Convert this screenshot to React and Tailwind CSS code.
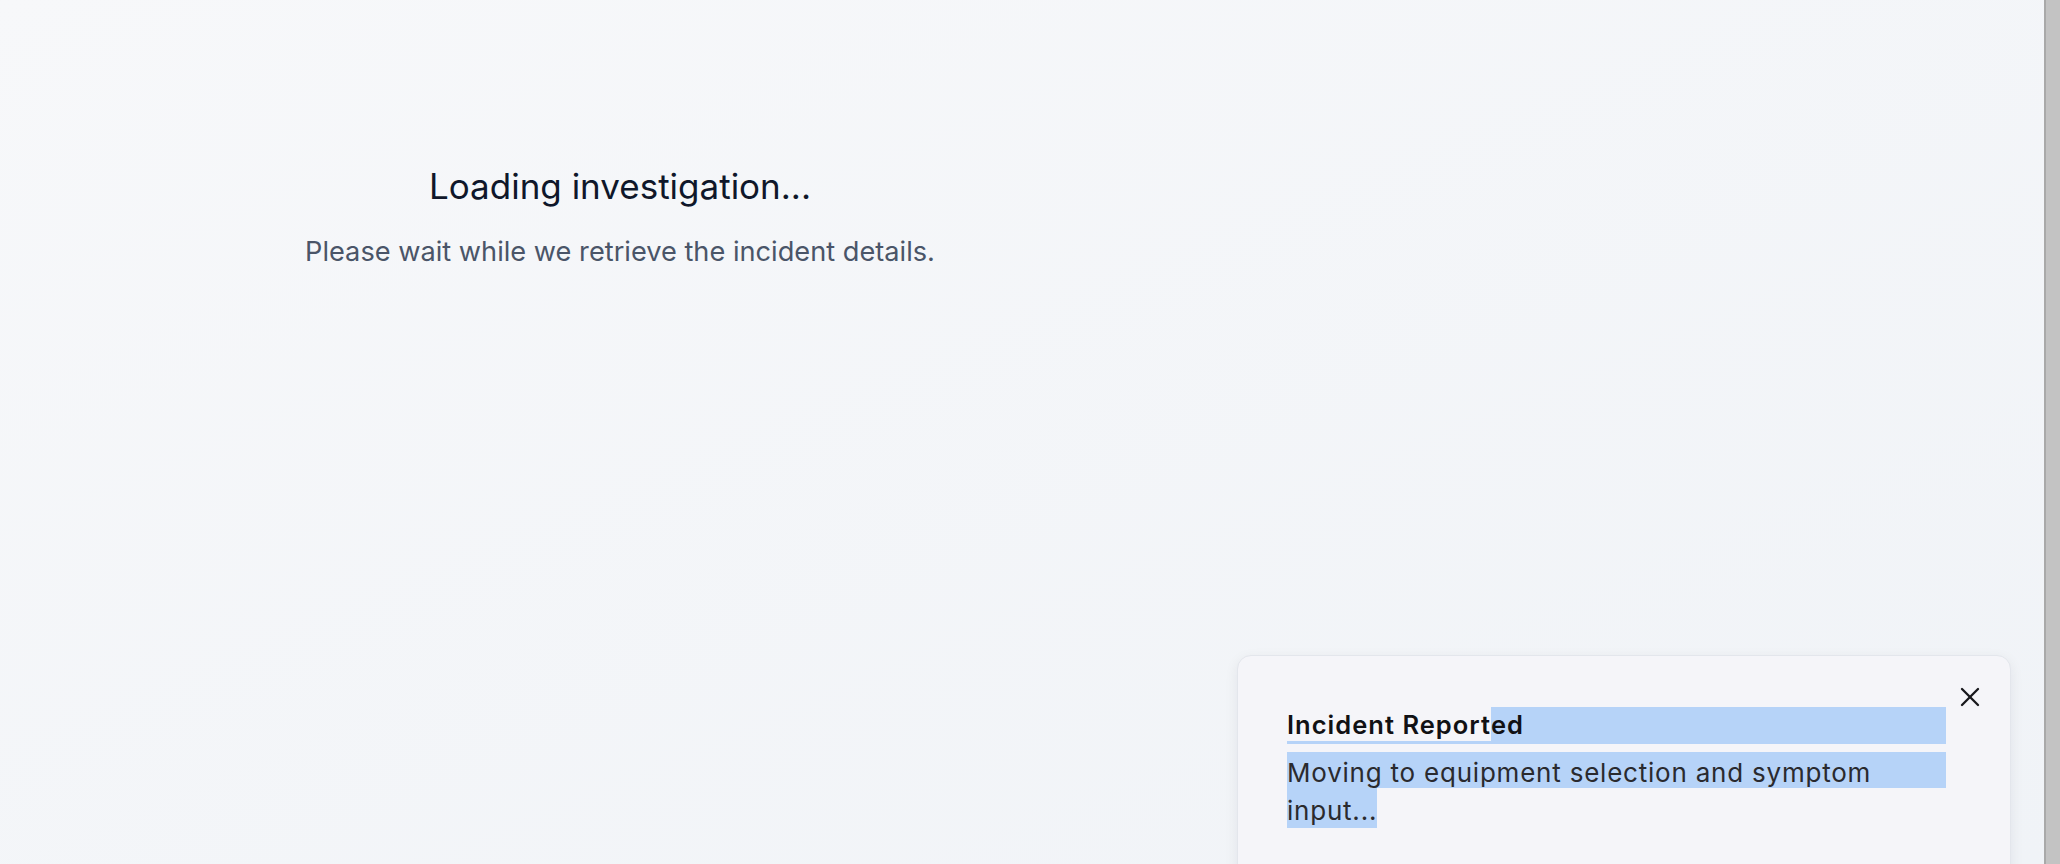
import React from 'react';

const Toast = () => {
  return (
    <div className="absolute top-[655px] left-[1237px] w-[774px] h-[240px] rounded-[14px] border border-[#e3e6ec] bg-[#f5f5f9] shadow-[0_4px_14px_rgba(15,23,42,0.07)] pt-[51px] pl-[49px] pr-[64px]">
      {/* Close button */}
      <button className="absolute top-[31px] right-[30px] w-[20px] h-[20px] text-[#18181b]">
        <svg width="20" height="20" viewBox="0 0 20 20" fill="none" stroke="currentColor" strokeWidth="2.3" strokeLinecap="round">
          <path d="M2 2 18 18" />
          <path d="M18 2 2 18" />
        </svg>
      </button>

      {/* Title (with selected text) */}
      <div className="flex h-[37px] items-center text-[25.5px] tracking-[0.04em] font-semibold text-[#111114]">
        <span className="h-full flex items-center shadow-[inset_0_-3px_0_#b6d3f8]">Incident Report</span>
        <span className="h-full flex-1 flex items-center bg-[#b6d3f8]">ed</span>
      </div>

      {/* Description (with selected text) */}
      <div className="mt-[8px] text-[26px] tracking-[0.03em] text-[#2a2a2e]">
        <div className="h-[36px] leading-[41px] bg-[#b6d3f8]">Moving to equipment selection and symptom</div>
        <div className="h-[40px]">
          <span className="inline-block h-[40px] leading-[46px] bg-[#b6d3f8] align-top">input...</span>
        </div>
      </div>
    </div>
  );
};

const App = () => {
  return (
    <div className="relative flex h-[864px] w-full overflow-hidden font-['Inter','Liberation_Sans',sans-serif]">
      {/* Main area */}
      <main className="flex-1 bg-gradient-to-br from-[#f7f8fa] to-[#f0f3f7]">
        <div className="w-[1240px] pt-[162px] text-center">
          <h2 className="text-[35px] leading-[49px] font-normal text-[#0f172a]">
            Loading investigation...
          </h2>
          <p className="mt-[20px] text-[27.2px] leading-[42px] text-[#4a5568]">
            Please wait while we retrieve the incident details.
          </p>
        </div>
      </main>

      {/* Right edge strip */}
      <div className="w-[16px] shrink-0 border-l-2 border-[#a9a9a9] bg-[#c3c3c3]" />

      <Toast />
    </div>
  );
};

export default App;
